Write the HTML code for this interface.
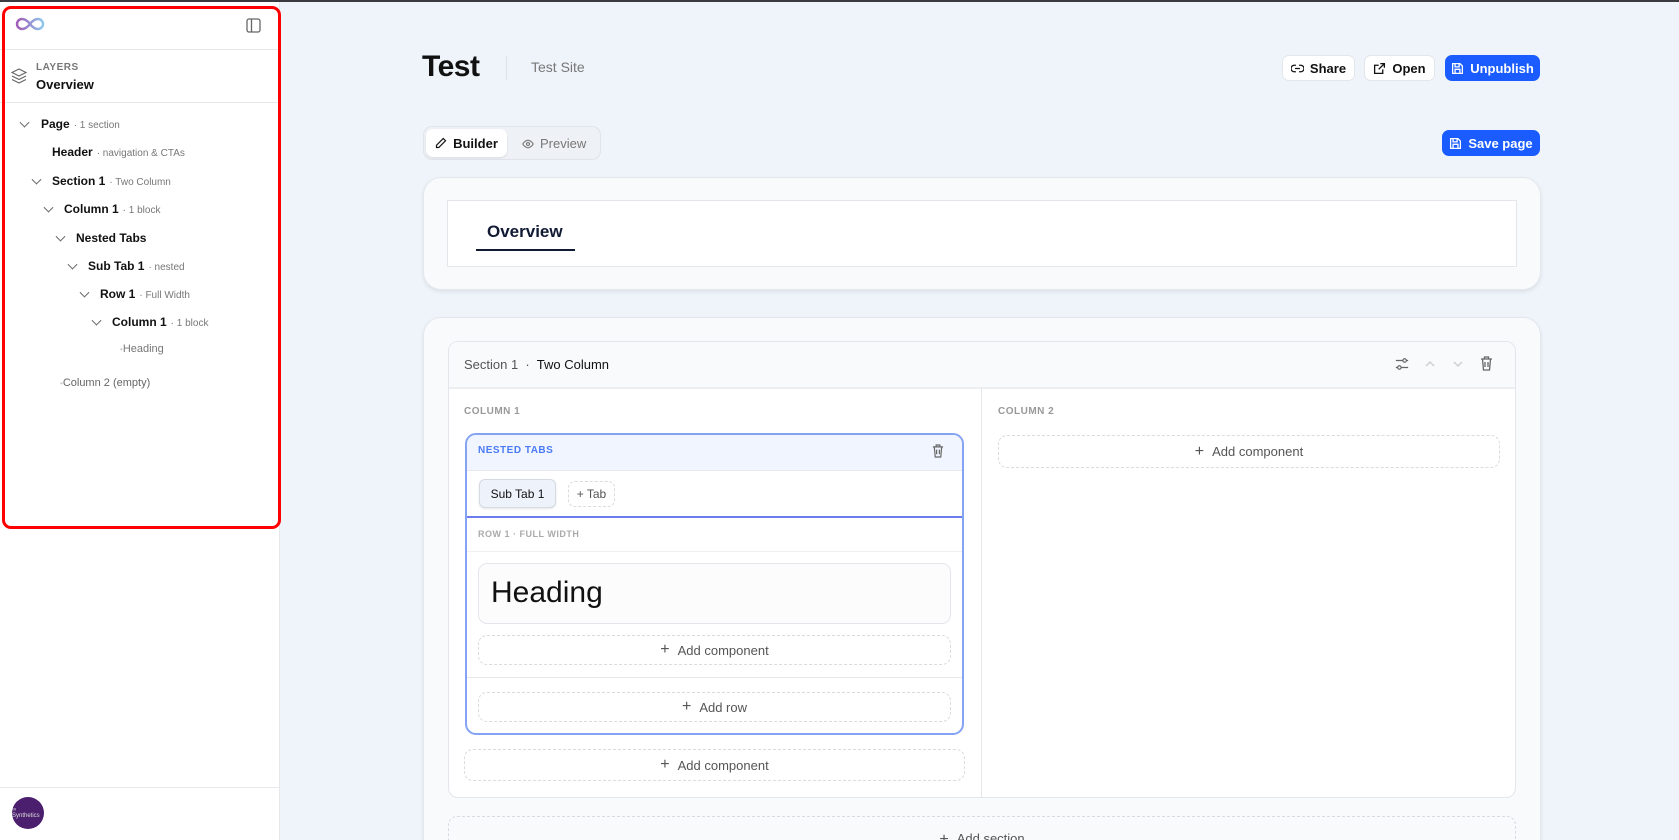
<!DOCTYPE html>
<html><head><meta charset="utf-8"><style>
*{box-sizing:border-box;margin:0;padding:0}
html,body{width:1679px;height:840px;overflow:hidden}
body{background:#eff4fb;font-family:"Liberation Sans",sans-serif;color:#111;position:relative}
.abs{position:absolute}
.topbar{left:0;top:0;width:1679px;height:2px;background:#3a3a3f}
.side{left:0;top:2px;width:280px;height:838px;background:#fff;border-right:1px solid #e5e7eb}
.red{left:2px;top:6px;width:279px;height:523px;border:3px solid #f00;border-radius:9px}
.hl{height:1px;background:#e6e8ec}
.t{position:absolute;font-size:12px;font-weight:bold;color:#111;white-space:nowrap;transform:translateY(-50%)}
.t span{font-weight:normal;color:#777;font-size:10px;margin-left:4px}
.chev{position:absolute;width:7px;height:7px;border-right:1.3px solid #666;border-bottom:1.3px solid #666;transform:translateY(-70%) rotate(45deg)}
.btn{position:absolute;background:#fff;border:1px solid #e3e6eb;border-radius:7px;font-size:13px;font-weight:bold;display:flex;align-items:center;justify-content:center;gap:6px}
.blue{background:#1a5cff;color:#fff;border-color:#1a5cff}
.card{background:#f8fafc;border:1px solid #e4e7ec;border-radius:18px;box-shadow:0 2px 4px rgba(0,0,0,.08)}
.dash{position:absolute;border:1px dashed #d8dbe0;border-radius:9px;display:flex;align-items:center;justify-content:center;font-size:13px;color:#555;gap:8px}
.lbl{position:absolute;font-size:10px;font-weight:bold;letter-spacing:.5px;color:#999}
</style></head><body>
<div class="abs topbar"></div>
<div class="abs side">
 <svg class="abs" style="left:15px;top:15px" width="30" height="14" viewBox="0 0 30 14"><defs><linearGradient id="g" x1="0" x2="1"><stop offset="0" stop-color="#a259b5"/><stop offset="1" stop-color="#8cc8f0"/></linearGradient></defs><path d="M15 7C12 3 9 2 7 2a5 5 0 0 0 0 10c2 0 5-1 8-5s6-5 8-5a5 5 0 0 1 0 10c-2 0-5-1-8-5" fill="none" stroke="url(#g)" stroke-width="2.4"/></svg>
 <svg class="abs" style="left:246px;top:16px" width="15" height="15" viewBox="0 0 15 15" fill="none" stroke="#666" stroke-width="1.3"><rect x="1" y="1" width="13" height="13" rx="2"/><path d="M5.5 1v13"/></svg>
 <div class="abs hl" style="left:0;top:47px;width:279px"></div>
 <svg class="abs" style="left:11px;top:66px" width="16" height="16" viewBox="0 0 16 16" fill="none" stroke="#666" stroke-width="1.2"><path d="M8 1 1 4.5 8 8l7-3.5z"/><path d="M1 8l7 3.5L15 8"/><path d="M1 11.5 8 15l7-3.5"/></svg>
 <div class="abs" style="left:36px;top:60px;font-size:10px;font-weight:bold;color:#777;letter-spacing:.5px">LAYERS</div>
 <div class="abs" style="left:36px;top:75px;font-size:13px;font-weight:bold">Overview</div>
 <div class="abs hl" style="left:0;top:100px;width:279px"></div>
 <div class="chev" style="left:21px;top:122px"></div><div class="t" style="left:41px;top:122px">Page<span>· 1 section</span></div>
 <div class="t" style="left:52px;top:150px">Header<span>· navigation &amp; CTAs</span></div>
 <div class="chev" style="left:33px;top:179px"></div><div class="t" style="left:52px;top:179px">Section 1<span>· Two Column</span></div>
 <div class="chev" style="left:45px;top:207px"></div><div class="t" style="left:64px;top:207px">Column 1<span>· 1 block</span></div>
 <div class="chev" style="left:57px;top:236px"></div><div class="t" style="left:76px;top:236px">Nested Tabs</div>
 <div class="chev" style="left:69px;top:264px"></div><div class="t" style="left:88px;top:264px">Sub Tab 1<span>· nested</span></div>
 <div class="chev" style="left:81px;top:292px"></div><div class="t" style="left:100px;top:292px">Row 1<span>· Full Width</span></div>
 <div class="chev" style="left:93px;top:320px"></div><div class="t" style="left:112px;top:320px">Column 1<span>· 1 block</span></div>
 <div class="t" style="left:120px;top:347px;font-weight:normal;color:#777;font-size:11px"><b style="color:#ccc;font-size:8px">•</b>Heading</div>
 <div class="t" style="left:60px;top:381px;font-weight:normal;color:#666;font-size:11px"><b style="color:#ccc;font-size:8px">•</b>Column 2 (empty)</div>
 <div class="abs hl" style="left:0;top:785px;width:279px"></div>
 <div class="abs" style="left:12px;top:795px;width:32px;height:32px;border-radius:50%;background:#4b1f6e;color:#ddd;font-size:6px;display:flex;align-items:center;justify-content:center">∞ Synthetics</div>
</div>
<div class="abs red"></div>

<div class="abs" style="left:422px;top:50px;font-size:30px;font-weight:bold;letter-spacing:-.5px">Test</div>
<div class="abs" style="left:506px;top:56px;width:1px;height:24px;background:#dde1e7"></div>
<div class="abs" style="left:531px;top:59px;font-size:14px;color:#777">Test Site</div>
<div class="btn" style="left:1282px;top:55px;width:73px;height:26px">
<svg width="13" height="13" viewBox="0 0 16 16" fill="none" stroke="#111" stroke-width="1.6"><path d="M6 4H4a4 4 0 0 0 0 8h2M10 4h2a4 4 0 0 1 0 8h-2M5 8h6"/></svg>Share</div>
<div class="btn" style="left:1364px;top:55px;width:71px;height:26px">
<svg width="13" height="13" viewBox="0 0 16 16" fill="none" stroke="#111" stroke-width="1.6"><path d="M12 9v5H2V4h5M9 2h5v5M14 2 7 9"/></svg>Open</div>
<div class="btn blue" style="left:1445px;top:55px;width:95px;height:26px">
<svg width="13" height="13" viewBox="0 0 16 16" fill="none" stroke="#fff" stroke-width="1.6"><path d="M2 2h9l3 3v9H2z M5 2v4h5V2 M5 14V9h6v5"/></svg>Unpublish</div>

<div class="abs" style="left:423px;top:126px;width:178px;height:34px;background:#eef2f7;border:1px solid #e0e4ea;border-radius:9px"></div>
<div class="btn" style="left:426px;top:129px;width:81px;height:28px;border:none;box-shadow:0 1px 2px rgba(0,0,0,.1)">
<svg width="12" height="12" viewBox="0 0 16 16" fill="none" stroke="#111" stroke-width="1.6"><path d="M11 2l3 3-9 9H2v-3z"/></svg>Builder</div>
<div class="abs" style="left:522px;top:136px;font-size:13px;color:#777;display:flex;gap:6px;align-items:center"><svg width="12" height="12" viewBox="0 0 16 16" fill="none" stroke="#777" stroke-width="1.5"><path d="M1 8s3-5 7-5 7 5 7 5-3 5-7 5-7-5-7-5z"/><circle cx="8" cy="8" r="2"/></svg>Preview</div>
<div class="btn blue" style="left:1442px;top:130px;width:98px;height:26px">
<svg width="13" height="13" viewBox="0 0 16 16" fill="none" stroke="#fff" stroke-width="1.6"><path d="M2 2h9l3 3v9H2z M5 2v4h5V2 M5 14V9h6v5"/></svg>Save page</div>

<div class="abs card" style="left:423px;top:177px;width:1118px;height:113px"></div>
<div class="abs" style="left:447px;top:200px;width:1070px;height:67px;background:#fff;border:1px solid #e3e6eb"></div>
<div class="abs" style="left:487px;top:222px;font-size:17px;font-weight:bold;color:#111a33">Overview</div>
<div class="abs" style="left:476px;top:249px;width:99px;height:2px;background:#111a33"></div>

<div class="abs card" style="left:423px;top:317px;width:1118px;height:540px"></div>
<div class="abs" style="left:448px;top:341px;width:1068px;height:457px;background:#fff;border:1px solid #e3e6eb;border-radius:10px;overflow:hidden">
 <div style="height:47px;background:#f8fafc;border-bottom:2px solid #eceef2"></div>
</div>
<div class="abs" style="left:464px;top:357px;font-size:13px;color:#555">Section 1 &nbsp;·&nbsp; <span style="color:#111">Two Column</span></div>
<svg class="abs" style="left:1395px;top:357px" width="14" height="14" viewBox="0 0 16 16" fill="none" stroke="#666" stroke-width="1.3"><path d="M1 4h8M13 4h2M1 12h2M7 12h8"/><circle cx="11" cy="4" r="2"/><circle cx="5" cy="12" r="2"/></svg>
<svg class="abs" style="left:1425px;top:359px" width="10" height="10" viewBox="0 0 10 10" fill="none" stroke="#ccc" stroke-width="1.3"><path d="M1 7l4-4 4 4"/></svg>
<svg class="abs" style="left:1453px;top:359px" width="10" height="10" viewBox="0 0 10 10" fill="none" stroke="#ccc" stroke-width="1.3"><path d="M1 3l4 4 4-4"/></svg>
<svg class="abs" style="left:1480px;top:356px" width="13" height="15" viewBox="0 0 13 15" fill="none" stroke="#666" stroke-width="1.3"><path d="M1 3h11M4.5 3V1h4v2M2.5 3l1 11h6l1-11M5 6v5M8 6v5"/></svg>
<div class="abs" style="left:981px;top:388px;width:1px;height:409px;background:#e6e8ec"></div>
<div class="lbl" style="left:464px;top:406px">COLUMN 1</div>
<div class="lbl" style="left:998px;top:406px">COLUMN 2</div>

<div class="abs" style="left:465px;top:433px;width:499px;height:302px;border:2px solid #85a3f5;border-radius:11px;overflow:hidden;background:#fff">
 <div style="height:36px;background:#f0f5ff;border-bottom:1px solid #e6e8ec"></div>
 <div style="height:47px;border-bottom:2px solid #6a7cf0"></div>
 <div style="height:34px;border-bottom:1px solid #eef0f3"></div>
 <div style="position:absolute;left:0;top:242px;width:100%;height:1px;background:#e6e8ec"></div>
</div>
<div class="abs" style="left:478px;top:445px;font-size:10px;font-weight:bold;color:#4a7bf5;letter-spacing:.5px">NESTED TABS</div>
<svg class="abs" style="left:932px;top:444px" width="12" height="14" viewBox="0 0 13 15" fill="none" stroke="#666" stroke-width="1.3"><path d="M1 3h11M4.5 3V1h4v2M2.5 3l1 11h6l1-11M5 6v5M8 6v5"/></svg>
<div class="abs" style="left:479px;top:479px;width:77px;height:29px;background:#eef2fb;border:1px solid #d5dae3;border-radius:6px;font-size:12px;display:flex;align-items:center;justify-content:center;box-shadow:0 1px 2px rgba(0,0,0,.1)">Sub Tab 1</div>
<div class="dash" style="left:568px;top:481px;width:47px;height:26px;font-size:12px;border-radius:7px">+ Tab</div>
<div class="lbl" style="left:478px;top:529px;font-size:9px;color:#aaa">ROW 1 · FULL WIDTH</div>
<div class="abs" style="left:478px;top:563px;width:473px;height:61px;border:1px solid #e3e6eb;border-radius:9px;background:#fcfcfd"></div>
<div class="abs" style="left:491px;top:576px;font-size:30px;color:#111">Heading</div>
<div class="dash" style="left:478px;top:635px;width:473px;height:30px"><span style="font-size:16px">+</span>Add component</div>
<div class="dash" style="left:478px;top:692px;width:473px;height:30px"><span style="font-size:16px">+</span>Add row</div>
<div class="dash" style="left:464px;top:749px;width:501px;height:32px"><span style="font-size:16px">+</span>Add component</div>
<div class="dash" style="left:998px;top:435px;width:502px;height:33px"><span style="font-size:16px">+</span>Add component</div>
<div class="dash" style="left:448px;top:816px;width:1068px;height:60px;align-items:flex-start;padding-top:14px"><span style="font-size:16px">+</span>Add section</div>
</body></html>
